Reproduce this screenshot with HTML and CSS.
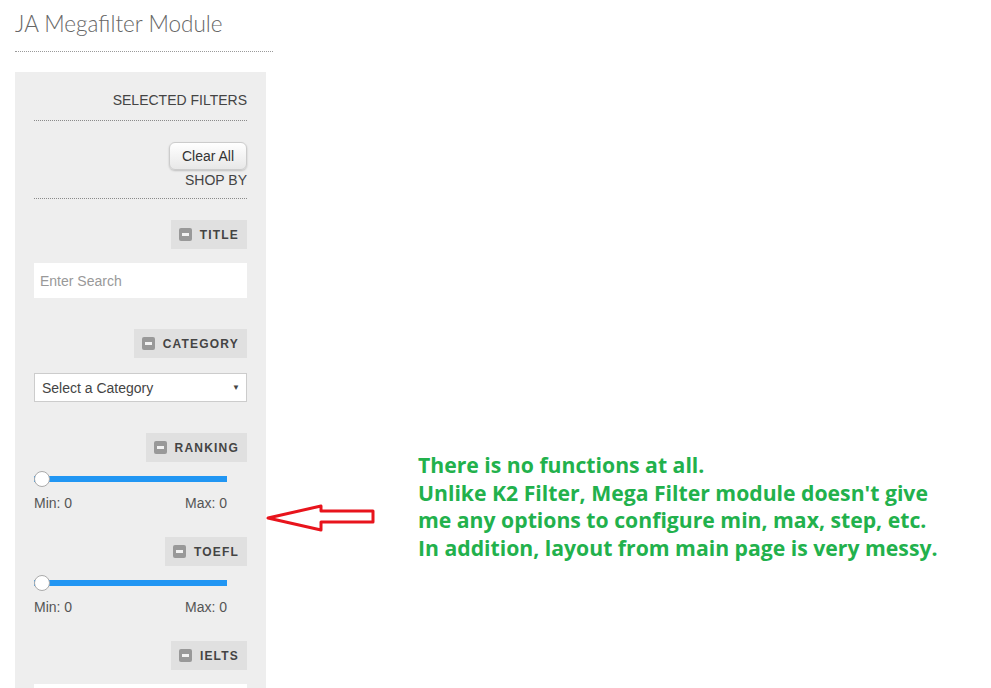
FILE: index.html
```html
<!DOCTYPE html>
<html>
	<head>
		<meta charset="utf-8">
		<title>JA Megafilter Module</title>
		<meta name="viewport" content="width=device-width, initial-scale=1.0">
		<link rel="stylesheet" href="styles.css">
	</head>
	<body>
		<div class="sidebar">
			<h3 class="module-title">JA Megafilter Module</h3>
			<div class="filter-panel">
				<div class="panel-head">SELECTED FILTERS</div>
				<div class="selected">
					<button class="clear-all">Clear All</button>
					<div class="shop-by">SHOP BY</div>
				</div>

				<div class="filter filter-first">
					<div class="filter-head"><span class="toggle"></span>TITLE</div>
					<input class="search" type="text" placeholder="Enter Search">
				</div>

				<div class="filter">
					<div class="filter-head"><span class="toggle"></span>CATEGORY</div>
					<div class="select">
						<span>Select a Category</span>
						<span class="caret">&#9660;</span>
					</div>
				</div>

				<div class="filter filter-range">
					<div class="filter-head"><span class="toggle"></span>RANKING</div>
					<div class="range">
						<div class="track"></div>
						<div class="handle"></div>
					</div>
					<div class="range-labels"><span>Min: 0</span><span>Max: 0</span></div>
				</div>

				<div class="filter filter-range">
					<div class="filter-head"><span class="toggle"></span>TOEFL</div>
					<div class="range">
						<div class="track"></div>
						<div class="handle"></div>
					</div>
					<div class="range-labels"><span>Min: 0</span><span>Max: 0</span></div>
				</div>

				<div class="filter">
					<div class="filter-head"><span class="toggle"></span>IELTS</div>
					<input class="search" type="text">
				</div>
			</div>
		</div>

		<div class="note">
			<svg class="arrow" width="110" height="30" viewBox="0 0 110 30">
				<polygon points="2,15 55,3 55,8 107,8 107,19 55,19 55,27" fill="none" stroke="#e8141c" stroke-width="3" stroke-linejoin="round"/>
			</svg>
			<p class="note-text">
				There is no functions at all.<br>
				Unlike K2 Filter, Mega Filter module doesn't give<br>
				me any options to configure min, max, step, etc.<br>
				In addition, layout from main page is very messy.
			</p>
		</div>
	</body>
</html>
```

FILE: styles.css
```css
html {
	height: 100%;
	overflow: hidden;
}

body {
	margin: 0;
	display: flex;
	align-items: flex-start;
	background-color: #ffffff;
	font-family: "Liberation Sans", Arial, sans-serif;
	color: #555555;
}

.sidebar {
	width: 251px;
	margin-left: 15px;
	flex-shrink: 0;
}

.module-title {
	margin: 0 -7px 0 0;
	padding: 9px 0 12px;
	font-family: Lato, "Open Sans", sans-serif;
	font-weight: 300;
	font-size: 22.5px;
	line-height: 30px;
	color: #666666;
	border-bottom: 1px dotted #9a9a9a;
}

.filter-panel {
	margin-top: 20px;
	padding: 0 19px 40px;
	background-color: #eeeeee;
	height: 700px;
}

.panel-head {
	padding: 18px 0 10px;
	font-size: 14px;
	line-height: 20px;
	text-align: right;
	color: #444444;
	border-bottom: 1px dotted #8a8a8a;
}

.selected {
	display: flex;
	flex-direction: column;
	align-items: flex-end;
	padding: 21px 0 8px;
	border-bottom: 1px dotted #8a8a8a;
}

.clear-all {
	height: 28px;
	width: 78px;
	padding: 0;
	font-family: "Liberation Sans", Arial, sans-serif;
	font-size: 14px;
	color: #333333;
	background: linear-gradient(#ffffff, #e8e8e8);
	border: 1px solid #cccccc;
	border-radius: 6px;
	box-shadow: 0 1px 2px rgba(0, 0, 0, 0.2);
}

.shop-by {
	font-size: 14px;
	line-height: 20px;
	color: #444444;
}

.filter {
	display: flex;
	flex-direction: column;
	margin-top: 31px;
}

.filter-first {
	margin-top: 21px;
}

.filter-range + .filter {
	margin-top: 24px;
}

.filter-head {
	align-self: flex-end;
	display: flex;
	align-items: center;
	height: 29px;
	padding: 0 8px 0 8px;
	background-color: #e0e0e0;
	font-size: 12px;
	font-weight: bold;
	letter-spacing: 1.2px;
	color: #444444;
}

.toggle {
	position: relative;
	width: 13px;
	height: 13px;
	margin-right: 8px;
	background-color: #999999;
	border-radius: 2px;
}

.toggle::after {
	content: "";
	position: absolute;
	left: 3px;
	top: 5px;
	width: 7px;
	height: 3px;
	background-color: #f2f2f2;
}

.search {
	margin-top: 14px;
	height: 35px;
	box-sizing: border-box;
	padding: 0 6px;
	border: none;
	background-color: #ffffff;
	font-family: "Liberation Sans", Arial, sans-serif;
	font-size: 14px;
}

.search::placeholder {
	color: #999999;
}

.select {
	display: flex;
	justify-content: space-between;
	align-items: center;
	margin-top: 15px;
	height: 29px;
	box-sizing: border-box;
	padding: 0 6px 0 7px;
	background-color: #ffffff;
	border: 1px solid #cccccc;
	font-size: 14px;
	color: #444444;
}

.caret {
	font-size: 8px;
	color: #444444;
}

.range {
	position: relative;
	width: 193px;
	height: 16px;
	margin-top: 9px;
}

.track {
	position: absolute;
	left: 0;
	right: 0;
	top: 5px;
	height: 6px;
	background-color: #2196f3;
}

.handle {
	position: absolute;
	left: 0;
	top: 0;
	width: 14px;
	height: 14px;
	border: 1px solid #aaaaaa;
	border-radius: 50%;
	background-color: #ffffff;
}

.range-labels {
	display: flex;
	justify-content: space-between;
	width: 193px;
	margin-top: 6px;
	font-size: 14px;
	line-height: 20px;
	color: #555555;
}

.note {
	display: flex;
	align-items: flex-start;
	padding-top: 451px;
}

.arrow {
	margin-top: 52px;
	flex-shrink: 0;
}

.note-text {
	margin: 0 0 0 42px;
	font-family: "Open Sans", sans-serif;
	font-weight: bold;
	font-size: 21.2px;
	line-height: 27.5px;
	color: #22b14c;
	white-space: nowrap;
}
```
